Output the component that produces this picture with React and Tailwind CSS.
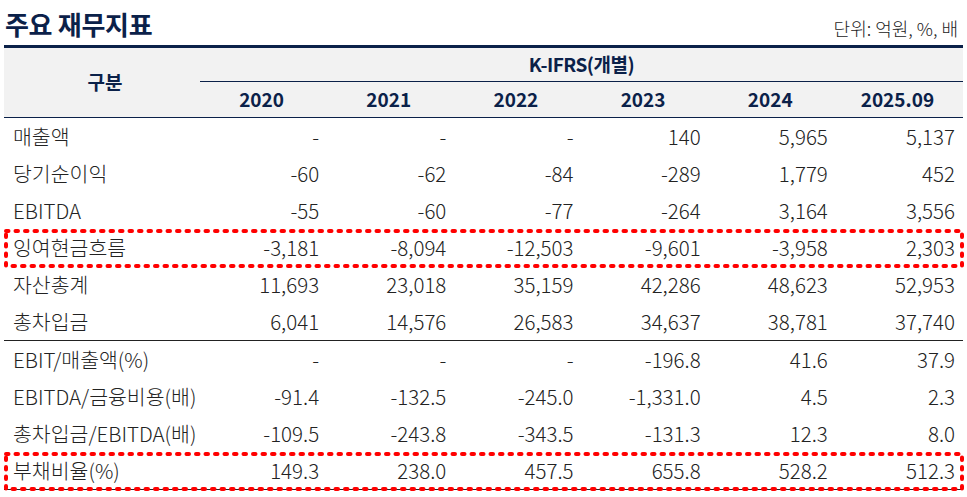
import React from 'react'

const years = ['2020', '2021', '2022', '2023', '2024', '2025.09']

const topRows = [
  { label: '매출액', values: ['-', '-', '-', '140', '5,965', '5,137'] },
  { label: '당기순이익', values: ['-60', '-62', '-84', '-289', '1,779', '452'] },
  { label: 'EBITDA', values: ['-55', '-60', '-77', '-264', '3,164', '3,556'] },
  { label: '잉여현금흐름', values: ['-3,181', '-8,094', '-12,503', '-9,601', '-3,958', '2,303'], marked: true },
  { label: '자산총계', values: ['11,693', '23,018', '35,159', '42,286', '48,623', '52,953'] },
  { label: '총차입금', values: ['6,041', '14,576', '26,583', '34,637', '38,781', '37,740'] },
]

const bottomRows = [
  { label: 'EBIT/매출액(%)', values: ['-', '-', '-', '-196.8', '41.6', '37.9'] },
  { label: 'EBITDA/금융비용(배)', values: ['-91.4', '-132.5', '-245.0', '-1,331.0', '4.5', '2.3'] },
  { label: '총차입금/EBITDA(배)', values: ['-109.5', '-243.8', '-343.5', '-131.3', '12.3', '8.0'] },
  { label: '부채비율(%)', values: ['149.3', '238.0', '457.5', '655.8', '528.2', '512.3'], marked: true },
]

// red dotted highlight drawn over a row
const Highlight = () => (
  <svg className="absolute left-[2px] top-[2px] h-[35px] w-[956px] overflow-visible pointer-events-none">
    <rect
      x="0"
      y="0"
      width="956"
      height="35"
      fill="none"
      stroke="#ff0000"
      strokeWidth="4"
      strokeDasharray="2.5 7"
      strokeLinecap="round"
    />
  </svg>
)

const Row = ({ row }) => (
  <div className="relative grid grid-cols-[196px_repeat(6,1fr)] h-[37px] items-center text-[#222]">
    <div className="pl-[9px] whitespace-nowrap">{row.label}</div>
    {row.values.map((v, i) => (
      <div key={i} className="text-right pr-2">{v}</div>
    ))}
    {row.marked && <Highlight />}
  </div>
)

const App = () => {
  return (
    <div
      className="w-[967px] h-[497px] bg-white px-[4px] overflow-hidden"
      style={{ fontFamily: '"Noto Sans CJK KR", "Noto Sans", sans-serif' }}
    >
      <div className="flex justify-between items-end h-[45px] pb-[8px]">
        <h1 className="text-[26px] leading-none font-bold text-[#0b2149] pl-[1px] tracking-[-0.3px]">주요 재무지표</h1>
        <span className="text-[18px] leading-none font-light text-[#222] pr-[5px]">단위: 억원, %, 배</span>
      </div>
      <div className="h-[3px] bg-[#0b2149]" />

      {/* header */}
      <div className="grid grid-cols-[196px_1fr] bg-[#f2f2f2] text-[#0b2149] font-bold text-[19px] border-b border-[#0b2149]">
        <div className="flex items-center justify-center pl-[6px]">구분</div>
        <div>
          <div className="h-[34px] flex items-center justify-center border-b border-[#0b2149] tracking-[-0.5px]">K-IFRS(개별)</div>
          <div className="grid grid-cols-6 h-[35px] items-center">
            {years.map(y => (
              <div key={y} className="text-center pr-[4px]">{y}</div>
            ))}
          </div>
        </div>
      </div>

      <div className="text-[20.5px] font-light">
        {topRows.map(r => <Row key={r.label} row={r} />)}
        <div className="h-px bg-[#222]" />
        {bottomRows.map(r => <Row key={r.label} row={r} />)}
        <div className="h-px bg-[#222]" />
      </div>
    </div>
  )
}

export default App
